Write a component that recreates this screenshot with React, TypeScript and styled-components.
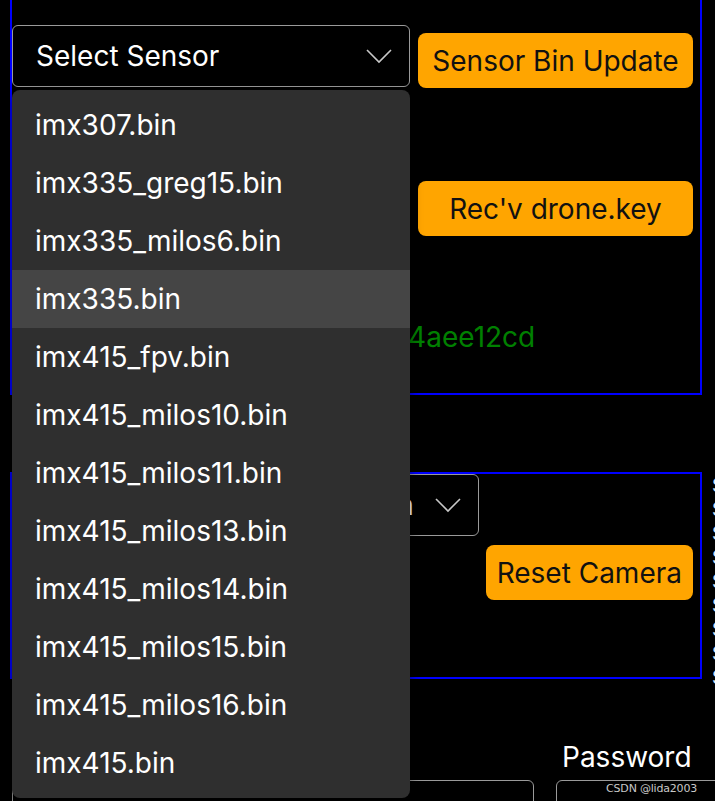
import styled, { createGlobalStyle } from 'styled-components'

const GlobalStyle = createGlobalStyle`
  html, body {
    margin: 0;
    padding: 0;
    background: #000000;
    overflow: hidden;
  }
  body {
    font-family: 'Inter', 'Noto Sans', sans-serif;
    color: #FFFFFF;
  }
`

const Page = styled.div`
  position: relative;
  width: 715px;
  height: 801px;
  padding-left: 10px;
  box-sizing: border-box;
  overflow: hidden;
`

const Panel = styled.div<{ $open?: boolean }>`
  width: 692px;
  flex-shrink: 0;
  box-sizing: border-box;
  border: 2px solid #0000FF;
  border-top: ${({ $open }) => ($open ? 'none' : '2px solid #0000FF')};
`

const SensorPanel = styled(Panel)`
  display: grid;
  grid-template-columns: 398px 275px;
  align-content: start;
  column-gap: 8px;
  padding: 25px 7px 0 0;
  height: 395px;
`

const CameraRow = styled.div`
  display: flex;
  align-items: flex-start;
  margin-top: 77px;
`

const CameraPanel = styled(Panel)`
  display: flex;
  flex-direction: column;
  height: 207px;
  padding: 0 7px 0 0;
`

const SideLetters = styled.div`
  display: flex;
  flex-direction: column;
  margin: 2px 0 0 10px;
  font-size: 19px;
  line-height: 24px;
  color: #D8E6FF;
`

const SelectWrap = styled.div`
  position: relative;
  align-self: start;
`

const SelectBox = styled.div<{ $width: number }>`
  width: ${({ $width }) => $width}px;
  height: 62px;
  box-sizing: border-box;
  border: 1.5px solid #9A9A9A;
  border-radius: 6px;
  display: flex;
  align-items: center;
  justify-content: space-between;
  gap: 8px;
  padding: 0 17px 0 23px;
  font-size: 28px;
  color: #FFFFFF;
  background: #000000;
  white-space: nowrap;
  overflow: hidden;
`

const SelectValue = styled.span<{ $spacing?: number }>`
  letter-spacing: ${({ $spacing }) => $spacing ?? 0}px;
`

const Chevron = () => (
  <svg width="26" height="16" viewBox="0 0 26 16" fill="none" style={{ flexShrink: 0 }}>
    <polyline points="1,2 13,14 25,2" stroke="#C8C8C8" strokeWidth="1.6" />
  </svg>
)

const ActionButton = styled.button<{ $offset?: number }>`
  margin-top: ${({ $offset }) => $offset ?? 0}px;
  height: 55px;
  border: none;
  border-radius: 8px;
  background: #FFA500;
  color: #111111;
  font-family: 'Inter', 'Noto Sans', sans-serif;
  font-size: 28px;
  padding: 0 11px;
  cursor: pointer;
`

const VersionText = styled.div`
  grid-column: 1 / -1;
  margin-top: 84px;
  padding-left: 72px;
  font-size: 28px;
  line-height: 34px;
  color: #008000;
  white-space: nowrap;
`

const ButtonRow = styled.div`
  display: flex;
  justify-content: flex-end;
  margin-top: 9px;
`

const LoginRow = styled.div`
  display: flex;
  gap: 22px;
  margin-top: 50px;
  padding-left: 2px;
`

const Field = styled.div<{ $width: number }>`
  display: flex;
  flex-direction: column;
  gap: 6px;
  width: ${({ $width }) => $width}px;
  flex-shrink: 0;
`

const FieldLabel = styled.label`
  font-size: 28px;
  line-height: 34px;
  padding-left: 6px;
  color: #FFFFFF;
`

const FieldInput = styled.div`
  height: 48px;
  border: 1.5px solid #9A9A9A;
  border-radius: 6px;
`

const Menu = styled.ul`
  position: absolute;
  top: calc(100% + 3px);
  left: 0;
  width: 398px;
  margin: 0;
  padding: 6px 0;
  list-style: none;
  background: #2F2F2F;
  border-radius: 8px;
  box-shadow: 0 4px 12px rgba(0, 0, 0, 0.5);
  z-index: 10;
`

const MenuItem = styled.li<{ $active?: boolean }>`
  height: 58px;
  display: flex;
  align-items: center;
  padding-left: 23px;
  font-size: 28px;
  color: #FFFFFF;
  background: ${({ $active }) => ($active ? '#454545' : 'transparent')};
`

const Watermark = styled.div`
  position: absolute;
  right: 18px;
  bottom: 6px;
  font-family: 'DejaVu Sans', sans-serif;
  font-size: 11px;
  color: #C8C8C8;
  letter-spacing: -0.2px;
`

const sensors = [
  'imx307.bin',
  'imx335_greg15.bin',
  'imx335_milos6.bin',
  'imx335.bin',
  'imx415_fpv.bin',
  'imx415_milos10.bin',
  'imx415_milos11.bin',
  'imx415_milos13.bin',
  'imx415_milos14.bin',
  'imx415_milos15.bin',
  'imx415_milos16.bin',
  'imx415.bin'
]

export default function App() {
  return (
    <>
      <GlobalStyle />
      <Page>
        <SensorPanel $open>
          <SelectWrap>
            <SelectBox $width={398}>
              <SelectValue>Select Sensor</SelectValue>
              <Chevron />
            </SelectBox>
            <Menu>
              {sensors.map((s) => (
                <MenuItem key={s} $active={s === 'imx335.bin'}>
                  {s}
                </MenuItem>
              ))}
            </Menu>
          </SelectWrap>
          <ActionButton $offset={8}>Sensor Bin Update</ActionButton>
          <div />
          <ActionButton $offset={93}>Rec'v drone.key</ActionButton>
          <VersionText>Firmware version: 0.9.2-4aee12cd</VersionText>
        </SensorPanel>

        <CameraRow>
          <CameraPanel>
            <SelectBox $width={467}>
              <SelectValue $spacing={0.35}>Resolution: 1920x1080 Main</SelectValue>
              <Chevron />
            </SelectBox>
            <ButtonRow>
              <ActionButton>Reset Camera</ActionButton>
            </ButtonRow>
          </CameraPanel>
          <SideLetters>
            {Array.from({ length: 9 }, (_, i) => (
              <span key={i}>S</span>
            ))}
          </SideLetters>
        </CameraRow>

        <LoginRow>
          <Field $width={522}>
            <FieldLabel>Username</FieldLabel>
            <FieldInput />
          </Field>
          <Field $width={200}>
            <FieldLabel>Password</FieldLabel>
            <FieldInput />
          </Field>
        </LoginRow>

        <Watermark>CSDN @lida2003</Watermark>
      </Page>
    </>
  )
}
